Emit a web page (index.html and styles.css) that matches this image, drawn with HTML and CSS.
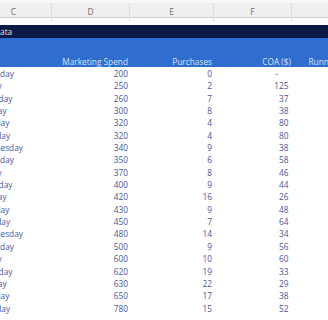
FILE: index.html
```html
<!DOCTYPE html>
<html lang="en">
<head>
    <meta charset="UTF-8">
    <meta name="viewport" content="width=device-width, initial-scale=1.0">
    <title>Marketing Data</title>
    <link rel="stylesheet" href="styles.css">
</head>
<body>

    <div class="sheet">
        <!-- Ribbon edge -->
        <div class="top-strip"></div>

        <!-- Column letters -->
        <div class="col-heads">
            <div class="col-head">C</div>
            <div class="col-head">D</div>
            <div class="col-head">E</div>
            <div class="col-head">F</div>
            <div class="col-head">G</div>
        </div>

        <div class="blank-row"></div>

        <!-- Table title -->
        <div class="title-row"><span class="title-text">Data</span></div>

        <!-- Table header -->
        <div class="row head-row">
            <div class="cell"></div>
            <div class="cell num">Marketing Spend</div>
            <div class="cell num">Purchases</div>
            <div class="cell num coa-head">COA ($)</div>
            <div class="cell num">Running Average COA</div>
        </div>

        <div class="rows" id="rows"></div>
        <div class="row"></div>
    </div>

    <script>
        const data = [
            ['Thursday', 200, 0, '-'],
            ['Friday', 250, 2, 125],
            ['Saturday', 260, 7, 37],
            ['Sunday', 300, 8, 38],
            ['Monday', 320, 4, 80],
            ['Tuesday', 320, 4, 80],
            ['Wednesday', 340, 9, 38],
            ['Thursday', 350, 6, 58],
            ['Friday', 370, 8, 46],
            ['Saturday', 400, 9, 44],
            ['Sunday', 420, 16, 26],
            ['Monday', 430, 9, 48],
            ['Tuesday', 450, 7, 64],
            ['Wednesday', 480, 14, 34],
            ['Thursday', 500, 9, 56],
            ['Friday', 600, 10, 60],
            ['Saturday', 620, 19, 33],
            ['Sunday', 630, 22, 29],
            ['Monday', 650, 17, 38],
            ['Tuesday', 780, 15, 52]
        ];

        let rows = document.getElementById('rows');
        data.forEach(d => {
            let row = document.createElement('div');
            row.classList.add('row');
            let coaClass = (d[3] === '-') ? 'cell num coa dash' : 'cell num coa';
            row.innerHTML = `
                <div class="cell day">${d[0]}</div>
                <div class="cell num">${d[1]}</div>
                <div class="cell num">${d[2]}</div>
                <div class="${coaClass}">${d[3]}</div>
                <div class="cell num"></div>`;
            rows.appendChild(row);
        });
    </script>

</body>
</html>
```

FILE: styles.css
```css
/* General Styling */
body {
    margin: 0;
    overflow: hidden;
    background: #ffffff;
    font-family: 'Open Sans', 'Segoe UI', sans-serif;
    font-size: 8.3px;
}

.sheet {
    margin-left: -24px;
    width: 419px;
}

.top-strip {
    height: 3px;
    background: #f7f7f7;
}

/* Column letters */
.col-heads {
    display: grid;
    grid-template-columns: 76px 78px 84px 78px 103px;
    height: 15px;
    background: #efefef;
    border-bottom: 1px solid #cfcfcf;
    box-sizing: border-box;
}

.col-head {
    color: #707070;
    text-align: center;
    line-height: 18px;
    font-size: 8.5px;
    border-right: 1px solid #dcdcdc;
}

.blank-row {
    height: 7px;
}

/* Title bar */
.title-row {
    height: 13px;
    background: #0b1a45;
    color: #e4e6ee;
    line-height: 13px;
}

.title-text {
    padding-left: 18px;
}

/* Rows */
.row {
    display: grid;
    grid-template-columns: 76px 78px 84px 78px 103px;
    height: 12.35px;
    color: #4a5598;
}

.cell {
    padding: 0 2px;
    line-height: 14px;
    white-space: nowrap;
    overflow: hidden;
}

.num {
    text-align: right;
}

.coa {
    padding-right: 3.5px;
}

.dash {
    padding-right: 14px;
}

.head-row {
    height: 29px;
    background: #2f6ecf;
    color: #d9e3f5;
}

.head-row .cell {
    line-height: 47px;
}

.head-row .coa-head {
    padding-right: 1px;
}
```
